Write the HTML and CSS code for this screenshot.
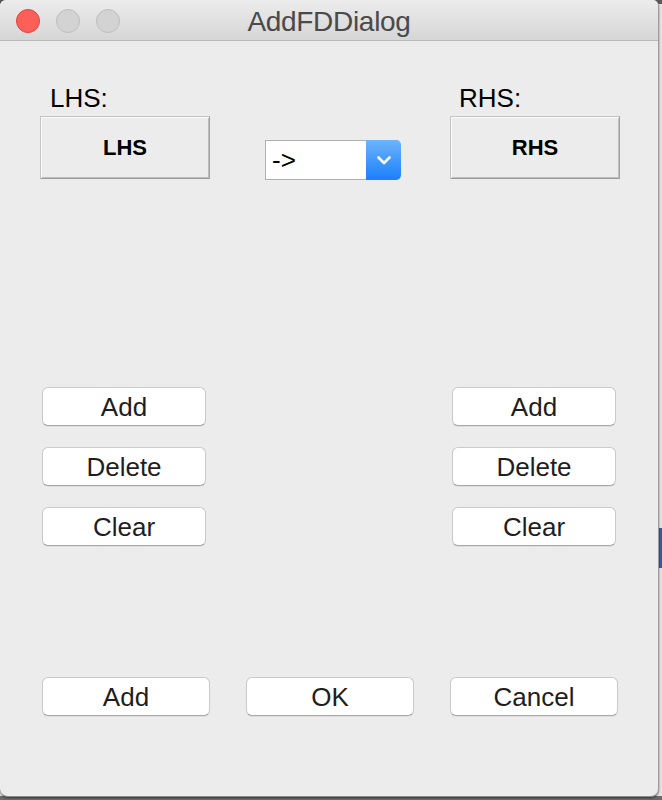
FILE: index.html
```html
<!DOCTYPE html>
<html>
<head>
<meta charset="utf-8">
<title>AddFDDialog</title>
<link rel="stylesheet" href="styles.css">
</head>
<body>
<div class="window">
  <div class="titlebar">
    <div class="lights">
      <span class="light close"></span>
      <span class="light off"></span>
      <span class="light off"></span>
    </div>
    <div class="title">AddFDDialog</div>
    <div class="spacer"></div>
  </div>
  <div class="content">
    <div class="top">
      <div class="label lhs-label">LHS:</div>
      <div class="label rhs-label">RHS:</div>
      <div class="square lhs-btn">LHS</div>
      <div class="select">
        <span class="select-text">-&gt;</span>
        <span class="select-arrow">
          <svg width="14" height="9" viewBox="0 0 14 9"><path d="M1.5 1.5 L7 7 L12.5 1.5" fill="none" stroke="#fff" stroke-width="2.6" stroke-linecap="round" stroke-linejoin="round"/></svg>
        </span>
      </div>
      <div class="square rhs-btn">RHS</div>
    </div>
    <div class="actions">
      <div class="col">
        <div class="btn small">Add</div>
        <div class="btn small">Delete</div>
        <div class="btn small">Clear</div>
      </div>
      <div class="col">
        <div class="btn small">Add</div>
        <div class="btn small">Delete</div>
        <div class="btn small">Clear</div>
      </div>
    </div>
    <div class="bottom">
      <div class="btn wide">Add</div>
      <div class="btn wide">OK</div>
      <div class="btn wide">Cancel</div>
    </div>
  </div>
</div>
</body>
</html>
```

FILE: styles.css
```css
html, body {
  margin: 0;
  padding: 0;
}
body {
  width: 662px;
  height: 800px;
  overflow: hidden;
  background: linear-gradient(to bottom, #5a5a5a 0 4px, #e4e4e4 4px 528px, #2b5fae 528px 568px, #e4e4e4 568px 796px, #6a6a6a 796px);
  font-family: "Liberation Sans", Arial, sans-serif;
}
.window {
  width: 658px;
  height: 796px;
  background: #ececec;
  border-right: 1px solid #9c9c9c;
  border-bottom: 1px solid #8a8a8a;
  border-radius: 6px 6px 8px 8px;
  overflow: hidden;
  box-shadow: 0 1px 2px rgba(0,0,0,0.5);
}
.titlebar {
  height: 40px;
  border-bottom: 1px solid #b8b8b8;
  background: linear-gradient(to bottom, #ececec, #d6d6d6);
  display: grid;
  grid-template-columns: 1fr auto 1fr;
  align-items: center;
}
.lights {
  display: flex;
  gap: 16px;
  padding-left: 16px;
}
.light {
  width: 22px;
  height: 22px;
  border-radius: 50%;
  box-sizing: content-box;
}
.close {
  background: #fc5f57;
  border: 1px solid #e0443e;
}
.off {
  background: #d3d3d3;
  border: 1px solid #bdbdbd;
}
.title {
  font-size: 28px;
  line-height: 40px;
  padding-top: 2px;
  color: #4a4a4a;
  letter-spacing: -0.3px;
}
.content {
  padding: 42px 0 0 40px;
}
.top {
  width: 580px;
  display: grid;
  grid-template-columns: 170px 240px 170px;
  grid-template-rows: 30px 64px;
  row-gap: 3px;
}
.label {
  font-size: 26px;
  line-height: 30px;
  color: #000;
  padding-left: 10px;
}
.lhs-label { grid-column: 1; grid-row: 1; }
.rhs-label { grid-column: 3; grid-row: 1; padding-left: 9px; }
.square {
  height: 63px;
  box-sizing: border-box;
  background: #ececec;
  border: 1px solid;
  border-color: #c4c4c4 #a2a2a2 #9a9a9a #c4c4c4;
  box-shadow: inset 1px 1px 0 #fbfbfb, inset -1px -1px 0 #bebebe;
  display: flex;
  align-items: center;
  justify-content: center;
  font-weight: bold;
  font-size: 22px;
  color: #000;
  align-self: start;
}
.lhs-btn { grid-column: 1; grid-row: 2; }
.rhs-btn { grid-column: 3; grid-row: 2; }
.select {
  grid-column: 2;
  grid-row: 2;
  align-self: end;
  margin-left: 55px;
  width: 136px;
  height: 40px;
  box-sizing: border-box;
  display: flex;
  background: #fff;
  border: 1px solid #b0b0b0;
  border-right: none;
  border-radius: 0 5px 5px 0;
}
.select-text {
  flex: 1;
  font-size: 26px;
  line-height: 38px;
  padding-left: 6px;
  color: #000;
}
.select-arrow {
  width: 35px;
  margin: -1px 0;
  border-radius: 0 5px 5px 0;
  background: linear-gradient(to bottom, #6db4fb, #1b7ffb);
  display: flex;
  align-items: center;
  justify-content: center;
}
.select-arrow svg {
  display: block;
  margin-top: 1px;
}
.actions {
  width: 580px;
  box-sizing: border-box;
  margin-top: 207px;
  display: flex;
  justify-content: space-between;
  padding: 0 4px 0 2px;
}
.col {
  display: flex;
  flex-direction: column;
  gap: 21px;
}
.btn {
  height: 39px;
  box-sizing: border-box;
  background: #fff;
  border: 1px solid #cacaca;
  border-bottom-color: #a8a8a8;
  border-radius: 6px;
  box-shadow: 0 1px 0 rgba(0,0,0,0.06);
  display: flex;
  align-items: center;
  justify-content: center;
  font-size: 26px;
  line-height: 30px;
  color: #1e1e1e;
}
.small { width: 164px; }
.wide { width: 168px; }
.bottom {
  margin-top: 131px;
  margin-left: 2px;
  width: 576px;
  display: flex;
  justify-content: space-between;
}
```
